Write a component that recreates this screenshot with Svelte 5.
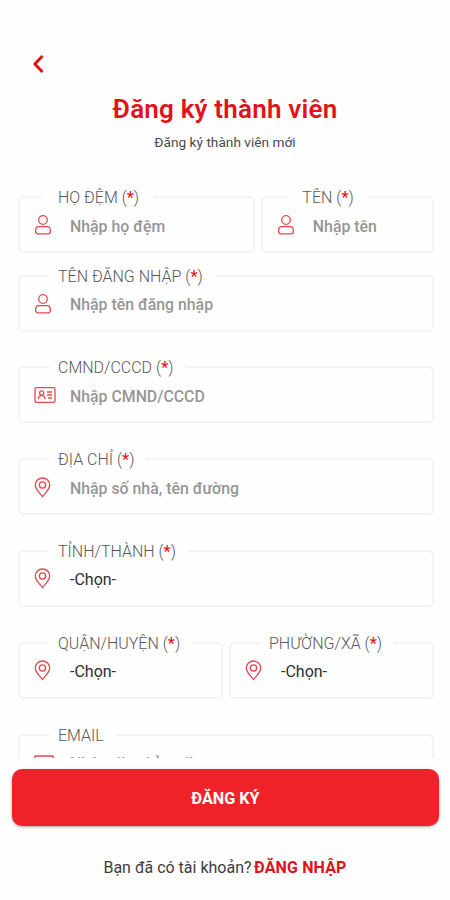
<script>
  const rows = [
    [
      { label: 'HỌ ĐỆM', required: true, icon: 'user', hint: 'Nhập họ đệm', grow: 237.5 },
      { label: 'TÊN', required: true, icon: 'user', hint: 'Nhập tên', grow: 172.5, shift: 1.5 }
    ],
    [{ label: 'TÊN ĐĂNG NHẬP', required: true, icon: 'user', hint: 'Nhập tên đăng nhập' }],
    [{ label: 'CMND/CCCD', required: true, icon: 'card', hint: 'Nhập CMND/CCCD' }],
    [{ label: 'ĐỊA CHỈ', required: true, icon: 'pin', hint: 'Nhập số nhà, tên đường' }],
    [{ label: 'TỈNH/THÀNH', required: true, icon: 'pin', value: '-Chọn-' }],
    [
      { label: 'QUẬN/HUYỆN', required: true, icon: 'pin', value: '-Chọn-' },
      { label: 'PHƯỜNG/XÃ', required: true, icon: 'pin', value: '-Chọn-' }
    ],
    [{ label: 'EMAIL', required: false, icon: 'mail', hint: 'Nhập địa chỉ mail' }]
  ];
</script>

<main>
  <button class="back" aria-label="Quay lại">
    <svg width="14" height="20" viewBox="0 0 14 20"><path d="M11.5 2 3.8 10l7.7 8" /></svg>
  </button>
  <h1>Đăng ký thành viên</h1>
  <p class="sub">Đăng ký thành viên mới</p>

  <form>
    {#each rows as row, i}
      <div class="row" class:tight={i === 0}>
        {#each row as f}
          <fieldset style="flex-grow: {f.grow ?? 1}">
            <legend style="margin-left: {(i === 0 ? 23 : 29) + (f.shift ?? 0)}px">{f.label}{#if f.required}{' '}(<b>*</b>){/if}</legend>
            <div class="control">
              <span class="icon">
                {#if f.icon === 'user'}
                  <svg width="18" height="22" viewBox="0 0 18 22">
                    <circle cx="9" cy="6" r="4.3" />
                    <path d="M4.5 12.6h9c1.7 0 2.9 2.1 2.9 4.8 0 1.5-.8 2.4-2.3 2.4H3.9c-1.5 0-2.3-.9-2.3-2.4 0-2.7 1.2-4.8 2.9-4.8z" />
                  </svg>
                {:else if f.icon === 'card'}
                  <svg width="22" height="18" viewBox="0 0 22 18">
                    <rect x="1" y="1.6" width="20" height="14.8" rx="1.5" />
                    <circle cx="7.7" cy="7" r="2.1" />
                    <path d="M4.2 13.2c.3-2.3 1.4-3.5 3.5-3.5s3.2 1.2 3.5 3.5M13 6h5M13 9h5M14 12h4" />
                  </svg>
                {:else if f.icon === 'pin'}
                  <svg width="17" height="21" viewBox="0 0 16 20">
                    <path d="M8 18.8C6.5 16 1.2 12.4 1.2 7.6a6.8 6.6 0 0 1 13.6 0C14.8 12.4 9.5 16 8 18.8z" />
                    <circle cx="8" cy="7.6" r="3" />
                  </svg>
                {:else}
                  <svg class="mail" width="20" height="16" viewBox="0 0 20 16">
                    <path d="M1 1h18v14H1zM1 5l9 6 9-6" />
                  </svg>
                {/if}
              </span>
              {#if f.value}<span class="value">{f.value}</span>{:else}<span class="hint">{f.hint}</span>{/if}
            </div>
          </fieldset>
        {/each}
      </div>
    {/each}
  </form>

  <button class="submit">ĐĂNG KÝ</button>
  <p class="login">Bạn đã có tài khoản? <a href="#login">ĐĂNG NHẬP</a></p>
</main>

<style>
  :global(body) {
    background: #fefefe;
  }
  main {
    box-sizing: border-box;
    width: 450px;
    height: 900px;
    overflow: hidden;
    display: flex;
    flex-direction: column;
    font-family: Roboto, 'Liberation Sans', sans-serif;
    background: #fefefe;
  }
  button {
    border: 0;
    padding: 0;
    font-family: inherit;
  }
  .back {
    align-self: flex-start;
    margin: 54px 0 0 31px;
    height: 20px;
    background: none;
  }
  svg {
    display: block;
    fill: none;
    stroke: #e5484f;
    stroke-width: 1.3;
    stroke-linejoin: round;
  }
  .back svg {
    stroke: #df1119;
    stroke-width: 3;
  }
  h1 {
    margin: 19px 0 0;
    height: 32px;
    line-height: 32px;
    text-align: center;
    color: #e3131b;
    font-size: 26px;
    font-weight: 600;
    letter-spacing: 0.2px;
  }
  .sub {
    margin: 7px 0 0;
    height: 20px;
    line-height: 20px;
    text-align: center;
    font-size: 13.7px;
    color: #4a4a4a;
  }
  form {
    margin-top: 35px;
    padding: 0 16px 0 18px;
    height: 571px;
    flex: none;
    overflow: hidden;
  }
  .row {
    display: flex;
    gap: 6px;
    margin-bottom: 25.8px;
  }
  .row.tight {
    margin-bottom: 12.6px;
  }
  .row.tight legend {
    padding: 0 15px;
  }
  fieldset {
    box-sizing: border-box;
    flex: 1 1 0;
    min-width: 0;
    height: 66px;
    margin: 0;
    padding: 0;
    border: 2px solid #f4f4f4;
    border-radius: 5px;
  }
  legend {
    height: 20px;
    line-height: 21px;
    padding: 0 12px 0 9px;
    font-size: 16px;
    font-weight: 300;
    color: #585858;
    white-space: nowrap;
  }
  legend b {
    color: #e8141c;
    font-weight: 500;
  }
  .control {
    display: flex;
    align-items: center;
    height: 38px;
    padding-left: 14px;
  }
  .icon {
    width: 36px;
    margin-top: -2px;
  }
  .hint,
  .value {
    font-size: 16px;
    white-space: nowrap;
  }
  .hint {
    font-size: 15.85px;
    font-weight: 500;
    color: #969696;
  }
  .value {
    color: #2e2e2e;
  }
  .submit {
    margin: 11px 11px 0 12px;
    height: 57px;
    flex: none;
    border-radius: 10px;
    background: #ee2228;
    color: #fff;
    font-size: 16.2px;
    font-weight: 700;
    padding-top: 2px;
    box-shadow: 0 1px 3px rgba(0, 0, 0, 0.35);
  }
  .login {
    margin: 31px 0 0;
    line-height: 22px;
    text-align: center;
    font-size: 16px;
    color: #3c3c3c;
  }
  .login a {
    color: #df1119;
    font-weight: 700;
    text-decoration: none;
    margin-left: -1.5px;
    letter-spacing: 0.15px;
  }
</style>
